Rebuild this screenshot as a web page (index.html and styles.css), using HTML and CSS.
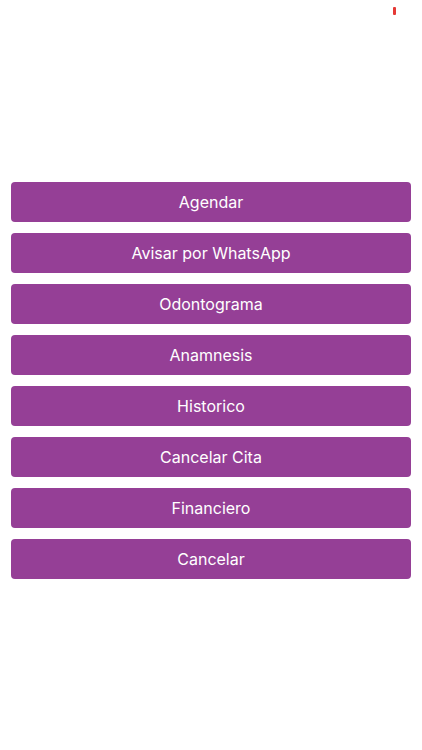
FILE: index.html
```html
<!DOCTYPE html>
<html lang="es">
<head>
<meta charset="utf-8">
<title>Opciones</title>
<link rel="stylesheet" href="styles.css">
</head>
<body>
<div class="status">
  <span class="rec"></span>
</div>
<div class="menu">
  <button class="btn">Agendar</button>
  <button class="btn">Avisar por WhatsApp</button>
  <button class="btn">Odontograma</button>
  <button class="btn">Anamnesis</button>
  <button class="btn">Historico</button>
  <button class="btn">Cancelar Cita</button>
  <button class="btn">Financiero</button>
  <button class="btn">Cancelar</button>
</div>
</body>
</html>
```
FILE: styles.css
```css
html, body {
  margin: 0;
  padding: 0;
  background: #ffffff;
  width: 422px;
  height: 750px;
  overflow: hidden;
  font-family: Inter, "Liberation Sans", sans-serif;
}
.status {
  height: 182px;
  display: flex;
  justify-content: flex-end;
  align-items: flex-start;
  padding-right: 26px;
  box-sizing: border-box;
}
.rec {
  display: block;
  width: 3px;
  height: 8px;
  margin-top: 7px;
  background: #e53935;
  border-radius: 1px;
}
.menu {
  display: flex;
  flex-direction: column;
  gap: 11px;
  padding: 0 11px;
}
.btn {
  height: 40px;
  border: none;
  border-radius: 4px;
  background: #953f96;
  color: #ffffff;
  font-family: Inter, "Liberation Sans", sans-serif;
  font-size: 16px;
  font-weight: 400;
  padding: 0;
  margin: 0;
  width: 100%;
  text-align: center;
  line-height: 40px;
}
```
